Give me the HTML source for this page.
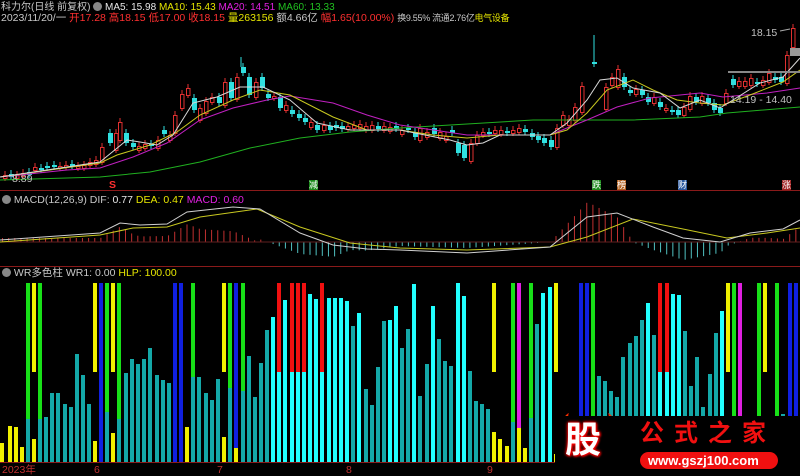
<!DOCTYPE html>
<html><head><meta charset="utf-8"><style>
html,body{margin:0;padding:0;background:#000;}
#w{position:relative;width:800px;height:476px;overflow:hidden;background:#000;font-family:"Liberation Sans","Noto Sans CJK SC",sans-serif;}
.t{position:absolute;font-size:10.5px;white-space:nowrap;line-height:11px;}
</style></head><body><div id="w">
<svg id="s" width="800" height="476" style="position:absolute;left:0;top:0"></svg>
<div class="t" style="left:1px;top:2px;color:#c8c8c8;font-size:10px">科力尔(日线 前复权) <span style="display:inline-block;width:9px;height:9px;border-radius:50%;background:#888;vertical-align:-1px"></span> <span style="color:#e8e8e8">MA5: 15.98</span> <span style="color:#e6e600">MA10: 15.43</span> <span style="color:#e020e0">MA20: 14.51</span> <span style="color:#20c020">MA60: 13.33</span></div>
<div class="t" style="left:1px;top:13px;color:#c8c8c8">2023/11/20/一 <span style="color:#ff3030">开17.28 高18.15 低17.00 收18.15</span> <span style="color:#e6e600">量263156</span> 额4.66亿 <span style="color:#ff3030">幅1.65(10.00%)</span> <span style="font-size:9px;letter-spacing:-0.3px">换9.55% 流通2.76亿<span style="color:#e6e600">电气设备</span></span></div>
<div class="t" style="left:2px;top:195px;color:#c8c8c8"><span style="display:inline-block;width:9px;height:9px;border-radius:50%;background:#888;vertical-align:-1px"></span> MACD(12,26,9) DIF: <span style="color:#e8e8e8">0.77</span> <span style="color:#e6e600">DEA: 0.47</span> <span style="color:#e020e0">MACD: 0.60</span></div>
<div class="t" style="left:2px;top:268px;color:#c8c8c8"><span style="display:inline-block;width:9px;height:9px;border-radius:50%;background:#888;vertical-align:-1px"></span> WR多色柱 WR1: 0.00 <span style="color:#e6e600">HLP: 100.00</span></div>
<div class="t" style="left:751px;top:28px;color:#c0c0c0">18.15</div>
<div class="t" style="left:730px;top:95px;color:#c0c0c0">14.19 - 14.40</div>
<div class="t" style="left:12px;top:174px;color:#c0c0c0">8.89</div>
<div class="t" style="left:109px;top:180px;color:#ff3030;font-weight:bold">S</div>
<div class="t" style="left:309px;top:180px;color:#fff;background:#1a8a1a;font-size:9px;line-height:10px">减</div>
<div class="t" style="left:592px;top:180px;color:#fff;background:#1a8a1a;font-size:9px;line-height:10px">跌</div>
<div class="t" style="left:617px;top:180px;color:#fff;background:#b06020;font-size:9px;line-height:10px">榜</div>
<div class="t" style="left:678px;top:180px;color:#fff;background:#2a5aa0;font-size:9px;line-height:10px">财</div>
<div class="t" style="left:782px;top:180px;color:#fff;background:#a02020;font-size:9px;line-height:10px">涨</div>
<div class="t" style="left:2px;top:465px;color:#c03030">2023年</div>
<div class="t" style="left:94px;top:465px;color:#c03030">6</div>
<div class="t" style="left:217px;top:465px;color:#c03030">7</div>
<div class="t" style="left:346px;top:465px;color:#c03030">8</div>
<div class="t" style="left:487px;top:465px;color:#c03030">9</div>
<div style="position:absolute;left:555px;top:416px;width:245px;height:60px;background:#000"></div>
<div class="t" style="left:565px;top:419px;font-size:36px;line-height:42px;font-weight:bold;color:#fff;text-shadow:0 0 3px #f00,0 0 3px #f00,1px 1px 2px #f00">股</div>
<div class="t" style="left:640px;top:420px;font-size:24px;line-height:28px;font-weight:bold;color:#f01010;letter-spacing:10px">公式之家</div>
<div style="position:absolute;left:640px;top:452px;width:138px;height:17px;border-radius:9px;background:#f01010"></div>
<div class="t" style="left:648px;top:453px;font-size:13px;line-height:15px;font-weight:bold;color:#fff">www.gszj100.com</div>
</div>
<script>
var S=document.getElementById('s'),h='';
function R(x,y,w,hh,c){h+='<rect x="'+x+'" y="'+y+'" width="'+w+'" height="'+hh+'" fill="'+c+'"/>';}
function L(x1,y1,x2,y2,c){h+='<line x1="'+x1+'" y1="'+y1+'" x2="'+x2+'" y2="'+y2+'" stroke="'+c+'" stroke-width="1"/>';}
function P(pts,c){h+='<polyline fill="none" stroke="'+c+'" stroke-width="1" points="'+pts.map(function(p){return p.join(',')}).join(' ')+'"/>';}
function interp(pts,x){for(var i=1;i<pts.length;i++){if(x<=pts[i][0]){var a=pts[i-1],b=pts[i];return a[1]+(b[1]-a[1])*(x-a[0])/(b[0]-a[0]);}}return pts[pts.length-1][1];}
R(0,190,800,1,'#8a1a1a');R(0,266,800,1,'#8a1a1a');R(0,462,555,1,'#8a1a1a');
var ma60=[[0,180],[100,177],[150,172],[200,162],[250,148],[300,138],[350,132],[400,128],[533,120],[633,120],[700,117],[727,113],[800,107]];
var ma20=[[0,177],[67,170],[100,168],[133,157],[167,143],[200,120],[233,108],[267,100],[290,96],[333,103],[367,115],[400,125],[467,135],[550,135],[567,128],[587,120],[617,107],[650,98],[700,93],[723,97],[767,93],[800,88]];
var ma10=[[0,177],[100,163],[117,155],[150,145],[177,132],[200,115],[233,100],[260,90],[290,95],[333,117],[367,130],[400,130],[433,135],[467,138],[500,135],[550,135],[567,130],[587,113],[607,90],[633,80],[653,90],[677,100],[700,103],[723,105],[750,95],[783,82],[800,70]];
var ma5=[[0,177],[67,167],[100,162],[127,140],[140,142],[157,145],[173,135],[193,103],[217,97],[240,87],[263,87],[290,100],[317,123],[350,130],[400,130],[450,140],[467,145],[483,143],[500,135],[550,135],[567,123],[587,100],[600,80],[617,78],[633,88],[660,93],[680,108],[700,100],[720,108],[733,100],[760,83],[783,77],[800,58]];
var cd=[[3,175,178,1],[9,174,177,0],[15,175,178,1],[21,173,176,1],[27,172,175,0],[33,167,170,1],[39,168,170,0],[45,166,168,0],[52,165,167,0],[58,166,168,1],[64,165,167,1],[70,164,166,0],[76,166,168,1],[82,165,168,1],[88,162,165,1],[94,160,164,1],[100,147,162,1],[108,133,143,0],[114,133,150,1],[118,122,140,1],[124,133,143,0],[131,143,147,0],[137,146,150,1],[143,144,148,1],[149,144,146,0],[156,140,148,1],[162,130,134,0],[168,135,140,1],[173,115,133,1],[180,94,108,1],[186,88,95,1],[192,98,110,0],[198,108,120,1],[204,101,113,1],[210,97,102,1],[217,97,103,0],[223,82,105,1],[229,82,98,0],[235,77,99,1],[241,67,73,0],[247,77,95,0],[254,82,97,1],[260,77,88,0],[266,94,98,0],[272,96,98,1],[278,97,108,0],[284,105,110,1],[290,110,114,0],[297,114,118,0],[303,118,122,0],[309,122,127,1],[315,125,130,0],[322,125,130,1],[328,126,130,0],[334,125,128,0],[340,126,129,0],[346,126,129,1],[352,125,128,1],[358,124,128,1],[364,126,130,1],[370,125,130,1],[376,126,129,0],[382,126,130,1],[388,127,131,1],[394,126,129,0],[400,130,134,1],[406,128,130,0],[413,132,137,0],[418,128,140,1],[425,132,137,1],[432,128,134,0],[438,132,138,1],[444,136,140,1],[450,130,133,0],[456,143,153,0],[462,145,158,0],[469,143,161,1],[475,135,143,1],[481,132,135,1],[487,132,134,0],[493,130,133,1],[499,130,134,1],[505,131,133,0],[511,130,133,1],[517,128,132,1],[523,129,132,0],[530,133,137,0],[536,136,140,0],[542,138,143,0],[549,140,147,0],[555,128,147,1],[561,115,125,1],[567,119,125,1],[573,107,120,1],[580,86,112,1],[592,62,64,0],[604,87,109,1],[610,77,85,1],[616,69,87,1],[622,77,87,0],[628,90,93,0],[634,89,94,1],[640,90,95,0],[646,97,102,0],[652,97,103,1],[658,102,107,0],[664,108,110,1],[670,110,112,0],[676,110,115,0],[682,107,115,1],[688,96,109,1],[694,97,102,0],[700,96,103,1],[706,98,103,0],[712,103,110,0],[718,108,113,0],[724,93,103,1],[731,79,85,0],[737,81,86,1],[743,81,86,1],[749,78,85,1],[755,82,84,0],[761,80,85,1],[767,73,82,1],[773,77,80,0],[779,77,82,0],[785,55,83,1],[791,28,47,1]];
cd.forEach(function(c){var col=c[3]?'#e03030':'#30e0e0';L(c[0]+2,c[1]-4,c[0]+2,c[2]+3,col);if(c[3]){h+='<rect x="'+(c[0]+0.5)+'" y="'+c[1]+'.5" width="3.5" height="'+Math.max(1,c[2]-c[1])+'" fill="#000" stroke="'+col+'"/>';}else R(c[0],c[1],5,Math.max(1,c[2]-c[1]),col);});
L(594,35,594,67,'#30e0e0');L(241,57,241,67,'#30e0e0');
P(ma60,'#20b020');P(ma20,'#c020c0');P(ma10,'#c8c820');P(ma5,'#d8d8d8');
R(728,71,72,2,'#888');R(790,48,10,8,'#999');L(780,31,790,29,'#aaa');
var dif=[[0,240],[100,233],[120,223],[140,225],[167,224],[187,212],[233,207],[260,209],[300,233],[333,245],[367,249],[400,250],[467,253],[550,247],[587,217],[617,213],[653,227],[683,238],[720,242],[750,233],[783,229],[800,220]];
var dea=[[0,242],[100,235],[133,228],[167,227],[200,217],[257,209],[300,227],[350,243],[400,248],[467,250],[550,247],[587,237],[633,219],[683,229],[727,238],[767,233],[800,228]];
for(var x=2;x<800;x+=6.15){var d=(interp(dea,x)-interp(dif,x))*2;var y0=242;if(d>0)R(x,y0-d,1,d,'#c03030');else R(x,y0,1,-d,'#50c0c0');}
L(0,242,800,242,'#602020');
P(dea,'#c8c820');P(dif,'#d0d0d0');
var TEAL='#14a8a8',CY='#22ffff',G='#18e018',Y='#f0f000',B='#1020e0',RD='#f01010',M='#e020e0';
function bar(x,segs){segs.forEach(function(s){R(x,s[1],4,s[2]-s[1],s[0]);});}
var bot=462;
function full(x,c,split,lc){bar(x,[[c,283,split],[lc,split,bot]]);}
function tb(x,top,c){bar(x,[[c||TEAL,top,bot]]);}
function yy(x,low){bar(x,[[Y,283,372]]);if(low)bar(x,[[Y,low,bot]]);}
tb(0,443,Y);tb(8,426,Y);tb(14,427,Y);tb(20,447,Y);
full(26,G,419,TEAL);yy(32,439);full(38,G,419,TEAL);
tb(44,417);tb(50,393);tb(56,393);tb(63,404);tb(69,407);tb(75,354);tb(81,375);tb(87,404);
yy(93,441);full(99,B,bot,B);full(105,G,412,TEAL);yy(111,433);full(117,G,419,TEAL);
tb(124,373);tb(130,359);tb(136,364);tb(142,359);tb(148,348);tb(155,375);tb(161,380);tb(167,383);
full(173,B,bot,B);full(179,B,bot,B);tb(185,427,Y);full(191,G,377,TEAL);
tb(197,377);tb(204,393);tb(210,400);tb(216,379);yy(222,437);full(228,G,388,TEAL);full(234,B,448,Y);full(241,G,391,TEAL);
tb(247,356);tb(253,397);tb(259,363);tb(265,330);tb(271,317,CY);full(277,RD,372,CY);tb(283,300,CY);full(290,RD,372,CY);full(296,RD,372,CY);full(302,RD,372,CY);
tb(308,294,CY);tb(314,299,CY);full(320,RD,372,CY);tb(327,298,CY);tb(333,298,CY);tb(339,298,CY);tb(345,301,CY);tb(351,326);tb(357,313,CY);tb(364,389);tb(370,405);tb(376,367);tb(382,321);tb(388,320,CY);tb(394,306,CY);
tb(400,348);tb(406,329);tb(412,284,CY);tb(418,396);tb(425,364);tb(431,306,CY);tb(437,339);tb(443,361);tb(449,366);tb(456,283,CY);tb(462,296,CY);tb(468,371);tb(474,401);tb(480,404);tb(486,409);
yy(492,432);tb(498,439,Y);tb(505,446,Y);full(511,G,422,TEAL);full(517,M,428,Y);tb(523,448,Y);full(529,G,418,TEAL);tb(535,324);tb(541,293,CY);tb(548,287,CY);yy(554,454);
bot=416;
full(579,B,bot,B);full(585,B,bot,B);full(591,G,bot,G);tb(597,376);tb(603,381);tb(609,391);tb(615,397);tb(621,357);tb(628,343);tb(634,336);tb(640,320);tb(646,303,CY);tb(652,335);full(658,RD,372,CY);full(665,RD,372,CY);tb(671,294,CY);tb(677,295,CY);tb(683,331);tb(689,386);tb(695,357);tb(701,407);tb(708,374);tb(714,333);tb(720,311,CY);
bar(726,[[Y,283,372]]);full(732,G,bot,G);full(738,M,bot,M);full(757,G,bot,G);bar(763,[[Y,283,372]]);full(775,G,bot,G);tb(781,414);full(788,B,bot,B);full(794,B,bot,B);
h+='<path d="M565 428 Q560 420 568 414 Q566 424 574 428 Z" fill="#f8c000" stroke="#f02000"/><path d="M612 428 Q617 420 609 414 Q611 424 603 428 Z" fill="#f8c000" stroke="#f02000"/>';
L(628,418,628,474,'#c02020');h+='<path d="M628 441 L632 445 L628 449 L624 445 Z" fill="#000" stroke="#c02020"/>';R(640,450,138,1,'#a02020');
S.innerHTML=h;
</script>
</body></html>
